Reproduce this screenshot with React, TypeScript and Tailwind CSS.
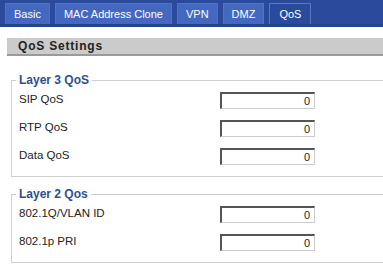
const tabs = ["Basic", "MAC Address Clone", "VPN", "DMZ", "QoS"];

function Row({ label }: { label: string }) {
  return (
    <div className="flex items-center h-[28px]">
      <span className="w-[208px] pl-[7px] text-[11.5px] text-[#222]">{label}</span>
      <div className="w-[95px] h-[17px] bg-white border-t-2 border-l-2 border-t-[#555] border-l-[#555] border-b border-r border-b-[#ccc] border-r-[#ccc] text-right pr-[4px] text-[11px] leading-[14px] text-[#222]">
        0
      </div>
    </div>
  );
}

function Group({ title, rows }: { title: string; rows: string[] }) {
  return (
    <fieldset className="ml-[4px] -mr-[10px] border border-[#cfcfcf] pb-[6px]">
      <legend className="ml-[4px] px-[3px] text-[12px] font-bold text-[#2d4f8c] leading-[12px]">{title}</legend>
      {rows.map((r) => (
        <Row key={r} label={r} />
      ))}
    </fieldset>
  );
}

export default function App() {
  return (
    <div className="w-[383px] h-[268px] bg-white overflow-hidden" style={{ fontFamily: "'Liberation Sans', Arial, sans-serif" }}>
      <div className="h-[27px] bg-[#2a4a9c] border-b-[3px] border-[#24438f] flex items-end gap-[5px] pl-[5px]">
        {tabs.map((t) => (
          <div
            key={t}
            className={
              t === "QoS"
                ? "h-[21px] px-[9px] flex items-center text-white text-[11px] bg-[#2a4a9c] border border-b-0 border-[#5676c8]"
                : "h-[21px] px-[8px] flex items-center text-white text-[11px] bg-[#4468c0] border border-b-0 border-[#4f73c8]"
            }
          >
            {t}
          </div>
        ))}
      </div>
      <div className="pt-[11px] pl-[7px]">
        <div className="h-[18px] bg-[#cbcbcb] border-b-2 border-[#9a9a9a] pl-[11px] flex items-center text-[12px] font-bold tracking-[0.8px] text-[#222]">
          QoS Settings
        </div>
        <div className="pt-[18px]">
          <Group title="Layer 3 QoS" rows={["SIP QoS", "RTP QoS", "Data QoS"]} />
        </div>
        <div className="pt-[11px]">
          <Group title="Layer 2 Qos" rows={["802.1Q/VLAN ID", "802.1p PRI"]} />
        </div>
      </div>
    </div>
  );
}
